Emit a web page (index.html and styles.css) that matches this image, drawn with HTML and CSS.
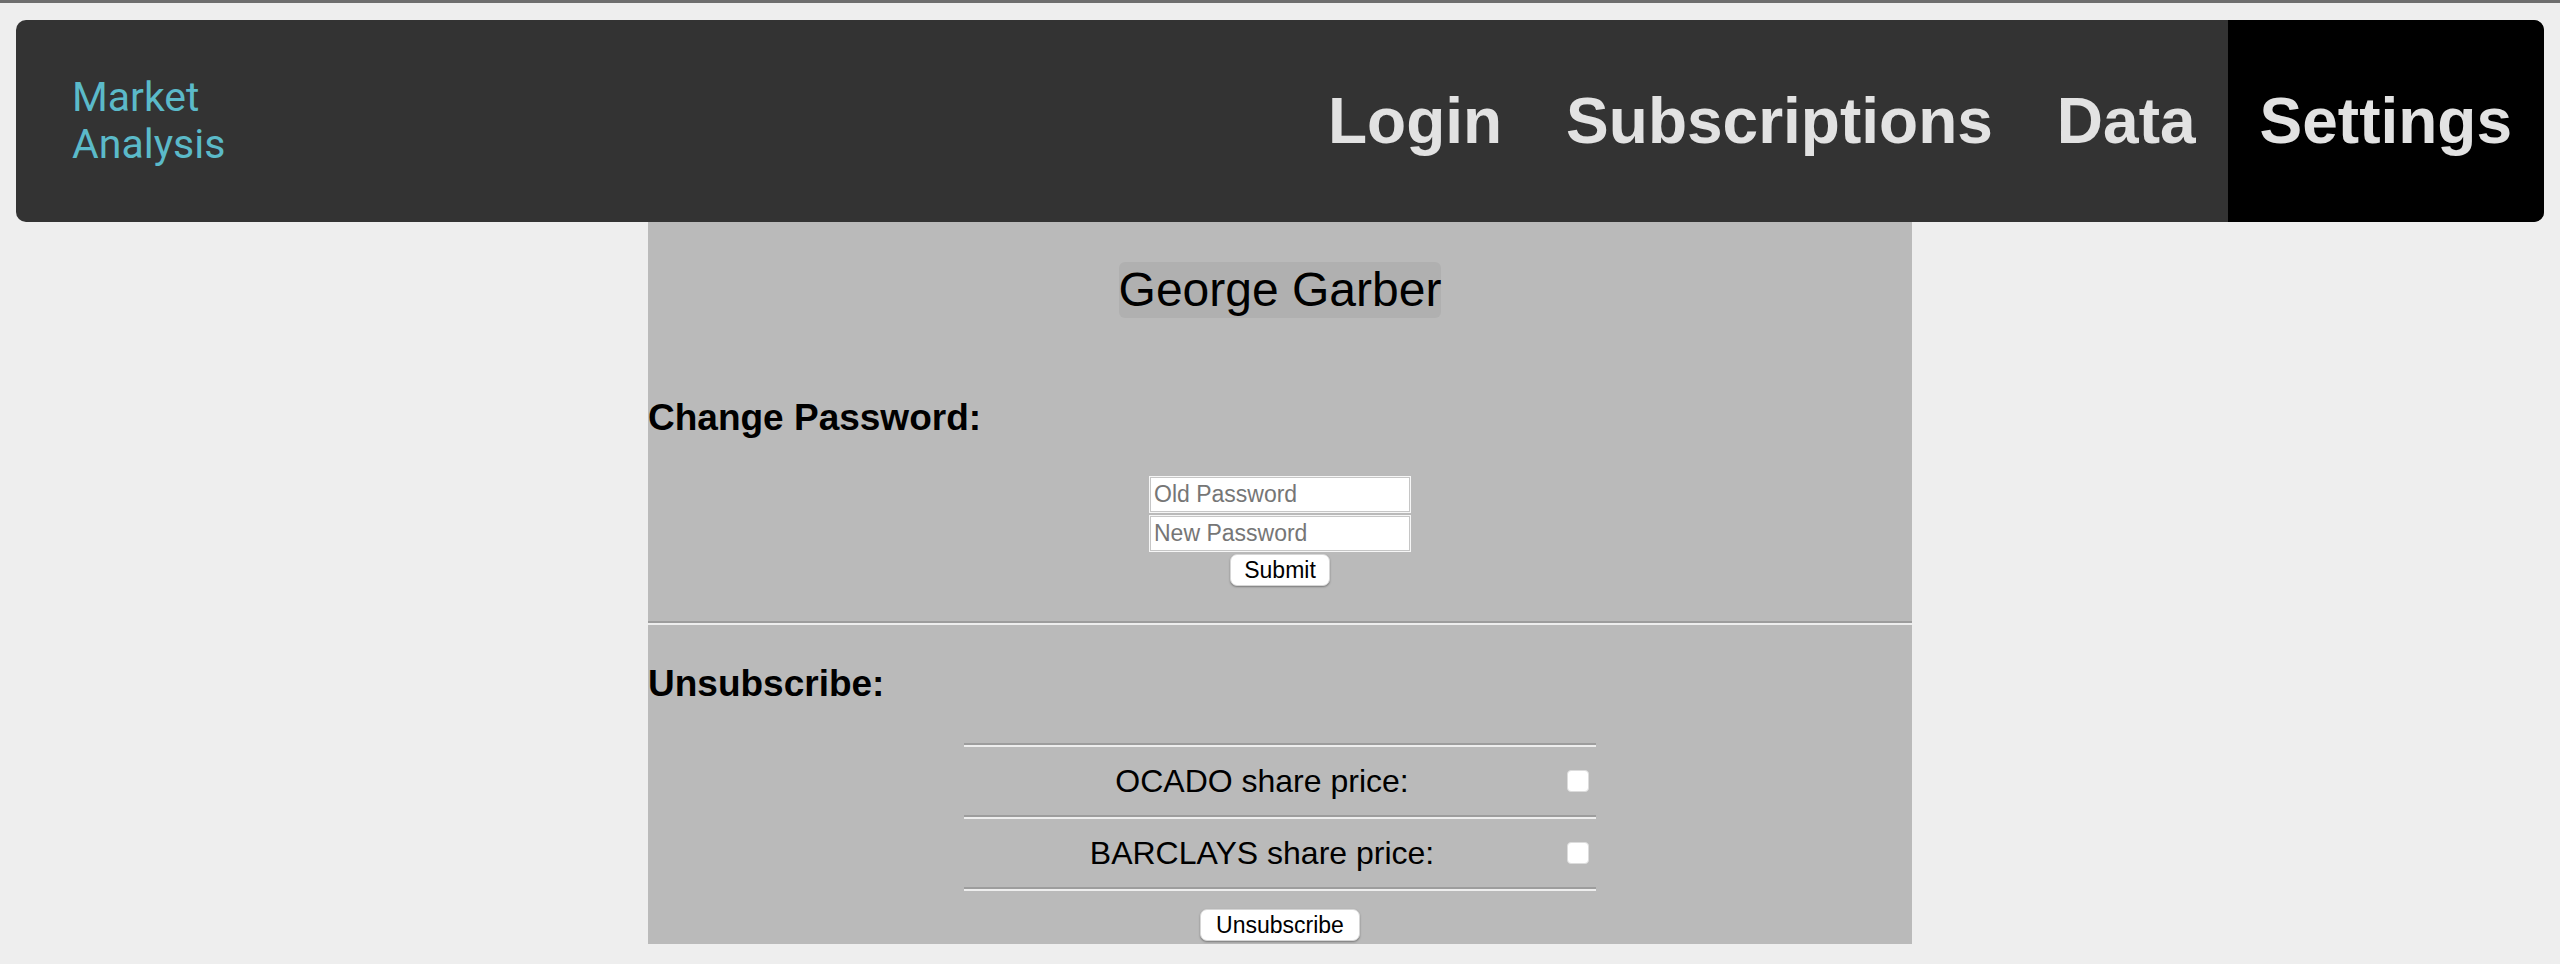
FILE: index.html
```html
<!DOCTYPE html>
<html lang="en">
<head>
<meta charset="utf-8">
<title>Market Analysis - Settings</title>
<link rel="stylesheet" href="styles.css">
</head>
<body>
<div class="chrome-strip"></div>
<div class="page">
  <header class="navbar">
    <div class="logo">Market<br>Analysis</div>
    <nav class="nav">
      <a class="nav-item" href="#">Login</a>
      <a class="nav-item" href="#">Subscriptions</a>
      <a class="nav-item" href="#">Data</a>
      <a class="nav-item active" href="#">Settings</a>
    </nav>
  </header>
  <main class="panel">
    <div class="name-row"><span class="name">George Garber</span></div>
    <h3 class="section-title first">Change Password:</h3>
    <form class="pw-form">
      <input class="field" type="password" placeholder="Old Password">
      <input class="field" type="password" placeholder="New Password">
      <button class="btn submit" type="button">Submit</button>
    </form>
    <div class="divider"></div>
    <h3 class="section-title second">Unsubscribe:</h3>
    <div class="sub-list">
      <div class="sub-row">
        <span class="sub-label">OCADO share price:</span>
        <span class="sub-check"><input class="check" type="checkbox"></span>
      </div>
      <div class="sub-row">
        <span class="sub-label">BARCLAYS share price:</span>
        <span class="sub-check"><input class="check" type="checkbox"></span>
      </div>
      <div class="sub-end"></div>
    </div>
    <div class="unsub-row"><button class="btn unsub" type="button">Unsubscribe</button></div>
  </main>
</div>
</body>
</html>
```
FILE: styles.css
```css
* { box-sizing: border-box; }

html, body {
  margin: 0;
  padding: 0;
  background: #eeeeee;
  font-family: "Liberation Sans", Arial, sans-serif;
}

.chrome-strip {
  height: 3px;
  background: #6e6e6e;
}

.page {
  padding: 17px 16px 0;
}

.navbar {
  height: 202px;
  background: #333333;
  border-radius: 10px;
  overflow: hidden;
  display: flex;
  justify-content: space-between;
  align-items: stretch;
}

.logo {
  align-self: center;
  padding-left: 56px;
  font-family: Roboto, "Noto Sans", sans-serif;
  font-size: 41px;
  line-height: 47px;
  color: #5bbac9;
}

.nav {
  display: flex;
  align-items: stretch;
}

.nav-item {
  display: flex;
  align-items: center;
  padding: 0 32px;
  font-size: 64px;
  font-weight: bold;
  color: #e2e2e2;
  text-decoration: none;
}

.nav-item.active {
  background: #000000;
}

.panel {
  width: 50%;
  margin: 0 auto;
  background: #bababa;
  padding: 40px 0 3px;
}

.name-row {
  text-align: center;
}

.name {
  display: inline-block;
  background: #b0b0b0;
  border-radius: 6px;
  font-size: 48px;
  line-height: 56px;
  color: #000;
}

.section-title {
  margin: 0;
  font-size: 37px;
  line-height: 43px;
  font-weight: bold;
  color: #000;
}

.section-title.first { margin-top: 78px; }
.section-title.second { margin-top: 37px; }

.pw-form {
  margin: 37px 0 0;
  display: flex;
  flex-direction: column;
  align-items: center;
  gap: 2px;
}

.field {
  width: 262px;
  height: 37px;
  margin: 0;
  padding: 0 4px;
  background: #ffffff;
  border: 1px solid #f6f6f6;
  box-shadow: inset 0 0 0 1px #c6c6c6;
  font-family: "Liberation Sans", Arial, sans-serif;
  font-size: 23px;
  color: #000;
  outline: none;
}

.field::placeholder {
  color: #767676;
}

.btn {
  height: 32px;
  margin: 0;
  padding: 0 12px;
  background: #ffffff;
  border: 1px solid #d6d6d6;
  border-radius: 7px;
  box-shadow: 0 1px 2px rgba(0, 0, 0, 0.35);
  font-family: "Liberation Sans", Arial, sans-serif;
  font-size: 23px;
  color: #000;
  line-height: 1;
}

.submit {
  width: 100px;
}

.divider {
  margin-top: 35px;
  height: 4px;
  border-top: 2px solid #9d9d9d;
  border-bottom: 2px solid #eeeeee;
}

.sub-list {
  width: 50%;
  margin: 38px auto 0;
}

.sub-row {
  display: grid;
  grid-template-columns: 1fr 36px;
  align-items: center;
  height: 72px;
  border-top: 2px solid #9d9d9d;
  box-shadow: inset 0 2px 0 #eeeeee;
  padding-top: 2px;
}

.sub-label {
  text-align: center;
  font-size: 32px;
  color: #000;
}

.sub-check {
  display: flex;
  justify-content: center;
}

.check {
  appearance: none;
  -webkit-appearance: none;
  width: 22px;
  height: 22px;
  margin: 0;
  background: #ffffff;
  border: 1px solid #dcdcdc;
  border-radius: 4px;
}

.sub-end {
  height: 4px;
  border-top: 2px solid #9d9d9d;
  border-bottom: 2px solid #eeeeee;
}

.unsub-row {
  margin-top: 18px;
  display: flex;
  justify-content: center;
}

.unsub {
  width: 160px;
}
```
